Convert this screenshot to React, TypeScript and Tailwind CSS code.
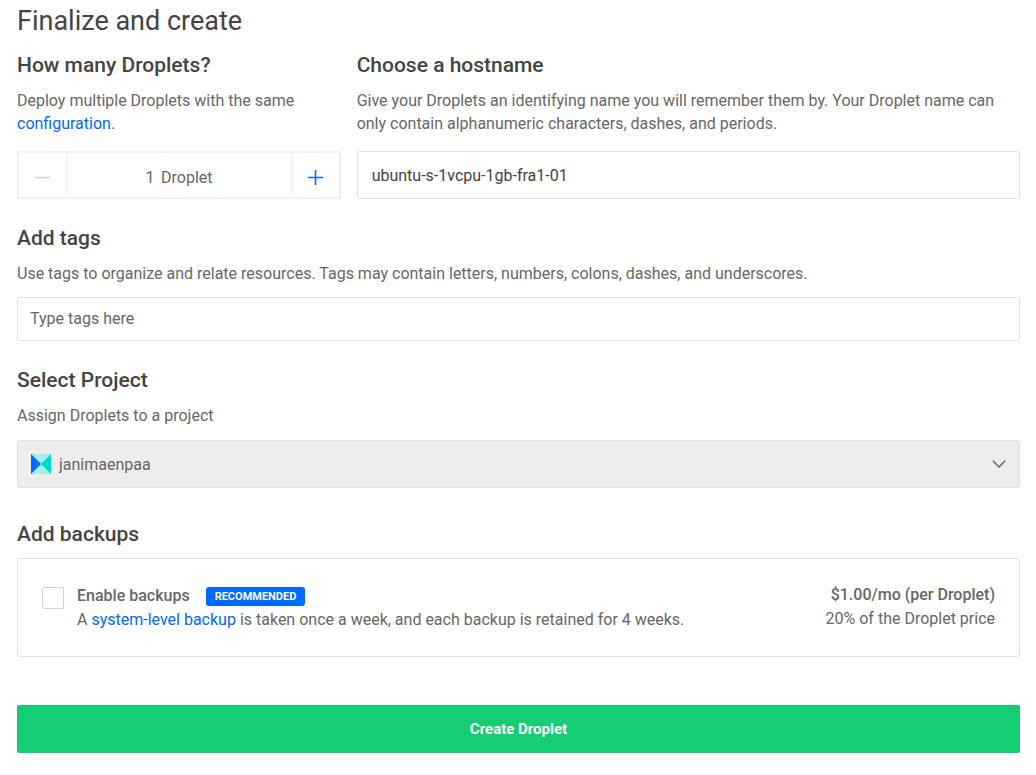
import React, { useState } from "react";

function ProjectLogo() {
  return (
    <svg viewBox="0 0 20 20" className="size-5" aria-hidden="true">
      <rect width="20" height="20" fill="#a1f2ee" />
      <path d="M0 0 10 10 0 20Z" fill="#0069ff" />
      <path d="M20 0 10 10 20 20Z" fill="#00d7d2" />
    </svg>
  );
}

const heading = "text-[21px] leading-6 font-medium text-[#444]";
const field = "w-full rounded-[3px] border border-[#dfdfdf] bg-white";
const link = "text-[#0069ff] hover:underline";

export default function App() {
  const [count, setCount] = useState(1);
  const [hostname, setHostname] = useState("ubuntu-s-1vcpu-1gb-fra1-01");

  return (
    <main className="bg-white pt-[5px] pr-4 pb-5 pl-[17px] font-['Roboto',sans-serif] text-base leading-[23px] text-[#676767]">
      <h1 className="text-[27px] leading-8 text-[#444]">Finalize and create</h1>

      <div className="mt-4 grid grid-cols-3 gap-4">
        <section>
          <h2 className={heading}>How many Droplets?</h2>
          <p className="mt-3">
            Deploy multiple Droplets with the same{" "}
            <a href="#configuration" className={link}>configuration</a>.
          </p>
          <div className="mt-4 flex h-12 border-2 border-[#f1f1f1]">
            <button
              type="button"
              aria-label="Remove a Droplet"
              disabled={count === 1}
              onClick={() => setCount(count - 1)}
              className="flex w-12 items-center justify-center border-r border-[#f1f1f1] pt-1 text-[#0069ff] disabled:text-[#d3d3d3]"
            >
              <svg viewBox="0 0 15 15" className="size-[15px]" aria-hidden="true">
                <path d="M0 7.5H15" stroke="currentColor" strokeWidth="1.6" />
              </svg>
            </button>
            <label className="flex flex-1 items-center justify-center gap-1.5 pt-1">
              <input
                value={count}
                onChange={(e) => setCount(Math.max(1, Number(e.target.value) || 1))}
                className="w-2.5 bg-transparent text-center outline-none"
              />
              <span>Droplet</span>
            </label>
            <button
              type="button"
              aria-label="Add a Droplet"
              onClick={() => setCount(count + 1)}
              className="flex w-12 items-center justify-center border-l border-[#f1f1f1] pt-1 text-[#0069ff]"
            >
              <svg viewBox="0 0 15 15" className="size-[15px]" aria-hidden="true">
                <path d="M0 7.5H15M7.5 0V15" stroke="currentColor" strokeWidth="1.6" />
              </svg>
            </button>
          </div>
        </section>

        <section className="col-span-2">
          <h2 className={heading}>
            <label htmlFor="hostname">Choose a hostname</label>
          </h2>
          <p className="mt-3">
            Give your Droplets an identifying name you will remember them by. Your Droplet name can only contain
            alphanumeric characters, dashes, and periods.
          </p>
          <input
            id="hostname"
            value={hostname}
            onChange={(e) => setHostname(e.target.value)}
            className={`${field} mt-4 h-12 px-3.5 text-[#444]`}
          />
        </section>
      </div>

      <section className="mt-[27px]">
        <h2 className={heading}>
          <label htmlFor="tags">Add tags</label>
        </h2>
        <p className="mt-3">
          Use tags to organize and relate resources. Tags may contain letters, numbers, colons, dashes, and underscores.
        </p>
        <input
          id="tags"
          placeholder="Type tags here"
          className={`${field} mt-3 h-11 px-3 pb-0.5 placeholder:text-[#676767]`}
        />
      </section>

      <section className="mt-[27px]">
        <h2 className={heading}>
          <label htmlFor="project">Select Project</label>
        </h2>
        <p className="mt-3">Assign Droplets to a project</p>
        <div className="relative mt-[13px]">
          <select
            id="project"
            className="h-12 w-full appearance-none rounded-[3px] border border-[#dfdfdf] bg-[#ededed] pr-10 pl-[41px]"
          >
            <option>janimaenpaa</option>
          </select>
          <span className="pointer-events-none absolute inset-y-0 left-3.5 flex items-center">
            <ProjectLogo />
          </span>
          <span className="pointer-events-none absolute inset-y-0 right-3.5 flex items-center">
            <svg viewBox="0 0 14 8" className="h-2 w-3.5" fill="none" stroke="#676767" strokeWidth="1.5" aria-hidden="true">
              <path d="M.8.8 7 7 13.2.8" />
            </svg>
          </span>
        </div>
      </section>

      <section className="mt-[34px]">
        <h2 className={heading}>Add backups</h2>
        <div className="mt-3 flex items-start rounded-[3px] border border-[#dfdfdf] p-6 leading-6">
          <input
            id="backups"
            type="checkbox"
            className="mt-1 size-[22px] appearance-none rounded-[2px] border border-[#d3d3d3] bg-white checked:bg-[#0069ff]"
          />
          <div className="mt-px ml-[13px] flex-1">
            <div className="flex h-6 items-center gap-4">
              <label htmlFor="backups" className="font-medium">Enable backups</label>
              <span className="rounded-[3px] bg-[#0069ff] px-[9px] text-[11px] leading-[19px] font-bold text-white">
                RECOMMENDED
              </span>
            </div>
            <p>
              A <a href="#backup" className={link}>system-level backup</a> is taken once a week, and each backup is
              retained for 4 weeks.
            </p>
          </div>
          <div className="text-right">
            <p className="font-medium">$1.00/mo (per Droplet)</p>
            <p>20% of the Droplet price</p>
          </div>
        </div>
      </section>

      <button type="button" className="mt-12 h-12 w-full rounded-[2px] bg-[#15cd72] text-[15px] font-bold text-white">
        Create Droplet
      </button>
    </main>
  );
}
